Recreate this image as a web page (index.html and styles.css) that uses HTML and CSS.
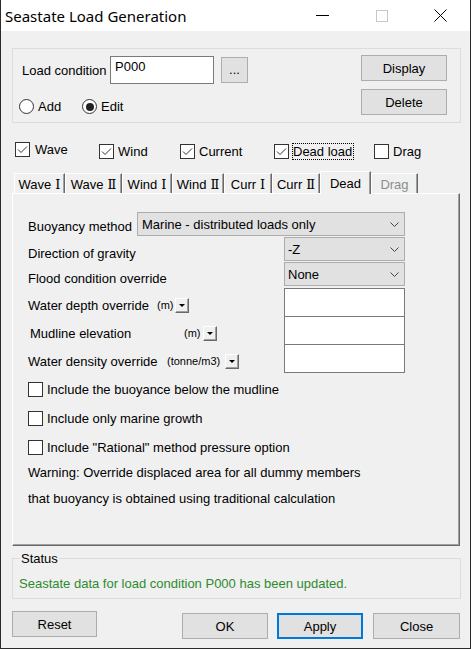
FILE: index.html
```html
<!DOCTYPE html>
<html>
<head>
<meta charset="utf-8">
<title>Seastate Load Generation</title>
<link rel="stylesheet" href="styles.css">
</head>
<body>
<div class="window">
  <div class="titlebar">
    <div class="title">Seastate Load Generation</div>
    <div class="caps">
      <div class="cap"><svg width="13" height="13" viewBox="0 0 13 13"><line x1="0" y1="6.5" x2="13" y2="6.5" stroke="#000" stroke-width="1"/></svg></div>
      <div class="cap"><svg width="12" height="12" viewBox="0 0 12 12"><rect x="0.5" y="0.5" width="11" height="11" fill="none" stroke="#c8c8c8" stroke-width="1"/></svg></div>
      <div class="cap"><svg width="13" height="13" viewBox="0 0 13 13"><path d="M0.5 0.5 L12.5 12.5 M12.5 0.5 L0.5 12.5" stroke="#000" stroke-width="1" fill="none"/></svg></div>
    </div>
  </div>
  <div class="client">
    <div class="group-top">
      <div class="lc-left">
        <div class="lc-row">
          <span class="lc-label">Load condition</span>
          <div class="textbox lc-input">P000</div>
          <div class="btn dots">...</div>
        </div>
        <div class="radio-row">
          <div class="radio radio-add"><span class="rb"></span><span>Add</span></div>
          <div class="radio"><span class="rb checked"></span><span>Edit</span></div>
        </div>
      </div>
      <div class="lc-right">
        <div class="btn btn-md">Display</div>
        <div class="btn btn-md">Delete</div>
      </div>
    </div>

    <div class="checks">
      <div class="chk w-wave raised"><span class="cb"><svg width="13" height="13" viewBox="0 0 13 13"><polyline points="2,6.5 5,9.5 11,3.5" fill="none" stroke="#333" stroke-width="1"/></svg></span><span>Wave</span></div>
      <div class="chk w-wind"><span class="cb"><svg width="13" height="13" viewBox="0 0 13 13"><polyline points="2,6.5 5,9.5 11,3.5" fill="none" stroke="#333" stroke-width="1"/></svg></span><span>Wind</span></div>
      <div class="chk w-current"><span class="cb"><svg width="13" height="13" viewBox="0 0 13 13"><polyline points="2,6.5 5,9.5 11,3.5" fill="none" stroke="#333" stroke-width="1"/></svg></span><span>Current</span></div>
      <div class="chk w-dead"><span class="cb"><svg width="13" height="13" viewBox="0 0 13 13"><polyline points="2,6.5 5,9.5 11,3.5" fill="none" stroke="#333" stroke-width="1"/></svg></span><span class="focus">Dead load</span></div>
      <div class="chk"><span class="cb"></span><span>Drag</span></div>
    </div>

    <div class="tabs">
      <div class="tab t-wave1">Wave <span class="num">Ⅰ</span></div>
      <div class="tab t-wave2">Wave <span class="num">Ⅱ</span></div>
      <div class="tab t-wind1">Wind <span class="num">Ⅰ</span></div>
      <div class="tab t-wind2">Wind <span class="num">Ⅱ</span></div>
      <div class="tab t-curr1">Curr <span class="num">Ⅰ</span></div>
      <div class="tab t-curr2">Curr <span class="num">Ⅱ</span></div>
      <div class="tab t-dead active">Dead</div>
      <div class="tab t-drag disabled">Drag</div>
    </div>

    <div class="panel">
      <div class="frow row-buoy">
        <span class="flabel lb-buoy">Buoyancy method</span>
        <div class="select sel-wide"><span>Marine - distributed loads only</span><svg class="chev" width="9" height="5" viewBox="0 0 9 5"><polyline points="0.5,0.5 4.5,4.5 8.5,0.5" fill="none" stroke="#444" stroke-width="1"/></svg></div>
      </div>
      <div class="frow row-sel">
        <span class="flabel lb-long">Direction of gravity</span>
        <div class="select sel-narrow"><span>-Z</span><svg class="chev" width="9" height="5" viewBox="0 0 9 5"><polyline points="0.5,0.5 4.5,4.5 8.5,0.5" fill="none" stroke="#444" stroke-width="1"/></svg></div>
      </div>
      <div class="frow row-sel">
        <span class="flabel lb-long">Flood condition override</span>
        <div class="select sel-narrow"><span>None</span><svg class="chev" width="9" height="5" viewBox="0 0 9 5"><polyline points="0.5,0.5 4.5,4.5 8.5,0.5" fill="none" stroke="#444" stroke-width="1"/></svg></div>
      </div>
      <div class="frow row-box first-box">
        <div class="lgroup">
          <span class="flabel w-depth">Water depth override</span>
          <span class="unit u-m1">(m)</span>
          <span class="mini"><span class="tri"></span></span>
        </div>
        <div class="textbox tb-val"></div>
      </div>
      <div class="frow row-box">
        <div class="lgroup">
          <span class="flabel w-mud">Mudline elevation</span>
          <span class="unit u-m2">(m)</span>
          <span class="mini"><span class="tri"></span></span>
        </div>
        <div class="textbox tb-val"></div>
      </div>
      <div class="frow row-box">
        <div class="lgroup">
          <span class="flabel w-dens">Water density override</span>
          <span class="unit u-t">(tonne/m3)</span>
          <span class="mini"><span class="tri"></span></span>
        </div>
        <div class="textbox tb-val"></div>
      </div>

      <div class="crow first-crow"><span class="cb"></span><span>Include the buoyance below the mudline</span></div>
      <div class="crow"><span class="cb"></span><span>Include only marine growth</span></div>
      <div class="crow"><span class="cb"></span><span>Include "Rational" method pressure option</span></div>
      <div class="wline first-wline">Warning: Override displaced area for all dummy members</div>
      <div class="wline">that buoyancy is obtained using traditional calculation</div>
    </div>

    <div class="status">
      <span class="status-title">Status</span>
      <div class="status-msg">Seastate data for load condition P000 has been updated.</div>
    </div>

    <div class="footer">
      <div class="btn btn-reset">Reset</div>
      <div class="footer-right">
        <div class="btn btn-ok">OK</div>
        <div class="btn btn-apply">Apply</div>
        <div class="btn btn-close">Close</div>
      </div>
    </div>
  </div>
</div>
</body>
</html>
```

FILE: styles.css
```css
* { box-sizing: border-box; }
html, body { margin: 0; padding: 0; }
body {
  width: 471px;
  height: 649px;
  overflow: hidden;
  background: #f0f0f0;
  font-family: "Liberation Sans", Arial, sans-serif;
  font-size: 13px;
  color: #000;
}
.window {
  width: 471px;
  height: 649px;
  border: 1px solid #2b2b2b;
  border-top: none;
  background: #f0f0f0;
  display: flex;
  flex-direction: column;
}
.titlebar {
  flex: none;
  height: 31px;
  background: #fff;
  display: flex;
  align-items: center;
}
.title {
  flex: 1;
  padding-left: 4px;
  padding-top: 1px;
  font-family: "Noto Sans", "Open Sans", sans-serif;
  font-size: 15px;
  color: #000;
}
.caps { display: flex; height: 31px; }
.cap {
  width: 59px;
  height: 31px;
  display: flex;
  align-items: center;
  justify-content: center;
}
.cap svg { display: block; }

.client { flex: 1; display: flex; flex-direction: column; }

.btn {
  background: #e1e1e1;
  border: 1px solid #adadad;
  display: flex;
  align-items: center;
  justify-content: center;
}
.textbox { background: #fff; border: 1px solid #7a7a7a; }

/* top group */
.group-top {
  margin: 17px 9px 0 11px;
  height: 75px;
  border: 1px solid #dcdcdc;
  display: flex;
  justify-content: space-between;
}
.lc-left { padding: 7px 0 0 6px; }
.lc-row { display: flex; align-items: center; height: 28px; }
.lc-label { width: 91px; padding-left: 3px; white-space: nowrap; }
.lc-input { width: 104px; height: 28px; padding: 3px 4px; line-height: 14px; }
.dots { margin-left: 7px; width: 27px; height: 26px; padding-bottom: 2px; }
.radio-row { display: flex; align-items: center; height: 15px; margin-top: 15px; }
.radio { display: flex; align-items: center; gap: 4px; }
.radio-add { width: 63px; }
.rb {
  width: 15px;
  height: 15px;
  border: 1px solid #333;
  border-radius: 50%;
  background: #fff;
  display: flex;
  align-items: center;
  justify-content: center;
}
.rb.checked::after {
  content: "";
  width: 8px;
  height: 8px;
  border-radius: 50%;
  background: #222;
}
.lc-right { padding: 6px 13px 0 0; display: flex; flex-direction: column; gap: 8px; }
.btn-md { width: 86px; height: 26px; }

/* checks row */
.checks {
  display: flex;
  align-items: center;
  height: 15px;
  margin-top: 21px;
  padding-left: 14px;
}
.chk { display: flex; align-items: center; gap: 4px; white-space: nowrap; }
.chk.raised { margin-bottom: 4px; }
.w-wave { width: 84px; gap: 5px; }
.w-wind { width: 81px; }
.w-current { width: 94px; }
.w-dead { width: 100px; }
.cb {
  flex: none;
  width: 15px;
  height: 15px;
  border: 1px solid #333;
  background: #fff;
  display: flex;
  align-items: center;
  justify-content: center;
}
.cb svg { display: block; }
.focus { border: 1px dotted #000; padding: 1px 1px 1px 0; line-height: 13px; margin-left: -1px; }

/* tabs */
.tabs {
  display: flex;
  align-items: flex-end;
  height: 22px;
  margin-top: 12px;
  padding-left: 13px;
}
.tab {
  height: 20px;
  background: #f0f0f0;
  border-top: 1px solid #fff;
  border-left: 1px solid #fff;
  border-right: 1px solid #696969;
  box-shadow: inset -1px 0 #a0a0a0;
  display: flex;
  align-items: center;
  justify-content: center;
  gap: 4px;
  padding-top: 1px;
  white-space: nowrap;
}
.tab .num { font-family: "DejaVu Serif", "Liberation Serif", serif; font-size: 13px; }
.tab.active {
  height: 23px;
  margin-bottom: -1px;
  z-index: 2;
  padding-top: 0;
}
.tab.disabled { color: #8d8d8d; }
.t-wave1 { width: 51px; }
.t-wave2 { width: 57px; }
.t-wind1 { width: 50px; }
.t-wind2 { width: 52px; }
.t-curr1 { width: 48px; }
.t-curr2 { width: 48px; }
.t-dead { width: 51px; }
.t-drag { width: 47px; }

/* panel */
.panel {
  margin-left: 11px;
  width: 448px;
  height: 353px;
  border-top: 1px solid #fff;
  border-left: 1px solid #fff;
  border-right: 1px solid #696969;
  border-bottom: 1px solid #696969;
  box-shadow: inset -1px -1px #a0a0a0;
  padding-left: 15px;
  display: flex;
  flex-direction: column;
}
.frow { display: flex; align-items: flex-end; flex: none; }
.flabel { line-height: 15px; white-space: nowrap; }
.row-buoy { margin-top: 18px; height: 24px; }
.lb-buoy { width: 109px; padding-bottom: 2px; }
.row-sel { margin-top: 1px; height: 24px; }
.lb-long { width: 256px; }
.select {
  height: 24px;
  background: #e1e1e1;
  border: 1px solid #adadad;
  display: flex;
  align-items: center;
  padding: 0 5px 0 4px;
  white-space: nowrap;
}
.select .chev { margin-left: auto; display: block; }
.sel-wide { width: 268px; }
.sel-narrow { width: 121px; padding-left: 3px; }
.row-box { margin-top: -1px; height: 29px; }
.row-box.first-box { margin-top: 2px; }
.lgroup {
  width: 256px;
  height: 15px;
  margin-bottom: 4px;
  display: flex;
  align-items: center;
}
.w-depth { width: 129px; }
.w-mud { width: 154px; margin-left: 2px; }
.w-dens { width: 139px; }
.unit { font-size: 11px; line-height: 13px; white-space: nowrap; }
.u-m1 { width: 18px; }
.u-m2 { width: 19px; }
.u-t { width: 58px; }
.mini {
  width: 14px;
  height: 15px;
  background: #f0f0f0;
  border: 1px solid;
  border-color: #fff #696969 #696969 #fff;
  box-shadow: inset -1px -1px #a0a0a0;
  display: flex;
  align-items: center;
  justify-content: center;
}
.tri {
  width: 0;
  height: 0;
  border-left: 3px solid transparent;
  border-right: 3px solid transparent;
  border-top: 3px solid #000;
  margin-right: 1px;
}
.tb-val { width: 121px; height: 29px; }

.crow { display: flex; align-items: center; gap: 4px; height: 29px; flex: none; white-space: nowrap; }
.crow.first-crow { margin-top: 2px; }
.wline { height: 26px; line-height: 26px; flex: none; white-space: nowrap; }
.wline.first-wline { margin-top: -2px; }

/* status */
.status {
  position: relative;
  margin: 12px 0 0 11px;
  width: 449px;
  height: 41px;
  border: 1px solid #dcdcdc;
}
.status-title {
  position: absolute;
  left: 7px;
  top: -8px;
  line-height: 15px;
  padding: 0 1px;
  background: #f0f0f0;
}
.status-msg {
  padding: 18px 0 0 6px;
  line-height: 14px;
  color: #2e8b2e;
  white-space: nowrap;
}

/* footer */
.footer {
  display: flex;
  align-items: flex-start;
  margin-top: 12px;
  padding: 0 10px 0 11px;
}
.btn-reset { width: 85px; height: 26px; }
.footer-right { margin-left: auto; display: flex; margin-top: 2px; }
.btn-ok { width: 86px; height: 26px; }
.btn-apply { width: 86px; height: 26px; margin-left: 9px; border: 2px solid #0078d7; }
.btn-close { width: 87px; height: 26px; margin-left: 10px; }
```
